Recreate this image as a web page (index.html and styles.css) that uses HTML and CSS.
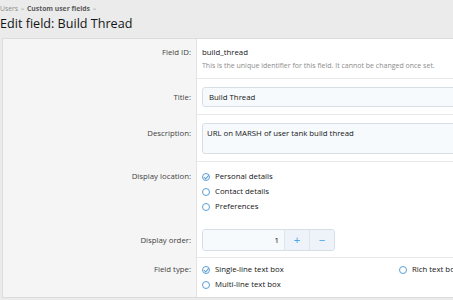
FILE: index.html
```html
<!DOCTYPE html>
<html lang="en">

<head>
    <meta charset="UTF-8">
    <meta name="viewport" content="width=device-width, initial-scale=1.0">
    <title>Edit field: Build Thread</title>
    <link rel="stylesheet" href="styles.css">
</head>

<body>
    <div class="page">
        <div class="breadcrumb">
            <a href="#">Users</a> <span class="sep">&gt;</span>
            <a href="#" class="strong">Custom user fields</a> <span class="sep">&gt;</span>
        </div>
        <h1 class="page-title">Edit field: Build Thread</h1>

        <form class="panel" action="#" method="post">
            <div class="row row-id">
                <div class="label">Field ID:</div>
                <div class="cell">
                    <div class="value">build_thread</div>
                    <div class="hint">This is the unique identifier for this field. It cannot be changed once set.</div>
                </div>
            </div>

            <div class="row row-input">
                <div class="label">Title:</div>
                <div class="cell">
                    <input type="text" class="text-input" value="Build Thread">
                </div>
            </div>

            <div class="row row-input">
                <div class="label">Description:</div>
                <div class="cell">
                    <textarea class="text-input textarea">URL on MARSH of user tank build thread</textarea>
                </div>
            </div>

            <div class="row row-choices no-line">
                <div class="label">Display location:</div>
                <div class="cell">
                    <ul class="choices">
                        <li class="choice checked"><span class="radio"></span>Personal details</li>
                        <li class="choice"><span class="radio"></span>Contact details</li>
                        <li class="choice"><span class="radio"></span>Preferences</li>
                    </ul>
                </div>
            </div>

            <div class="row row-spin">
                <div class="label">Display order:</div>
                <div class="cell">
                    <div class="spin">
                        <input type="text" class="spin-input" value="1">
                        <button type="button" class="spin-btn">+</button>
                        <button type="button" class="spin-btn">&minus;</button>
                    </div>
                </div>
            </div>

            <div class="row row-type last">
                <div class="label">Field type:</div>
                <div class="cell">
                    <ul class="choices two-col">
                        <li class="choice checked"><span class="radio"></span>Single-line text box</li>
                        <li class="choice"><span class="radio"></span>Rich text box</li>
                        <li class="choice"><span class="radio"></span>Multi-line text box</li>
                    </ul>
                </div>
            </div>
        </form>
    </div>
</body>

</html>
```

FILE: styles.css
```css
body {
    margin: 0;
    background-color: #ebebeb;
    font-family: "Open Sans", "Noto Sans", Arial, sans-serif;
    color: #141414;
    overflow: hidden;
}

.page {
    width: 700px;
}

.breadcrumb {
    font-size: 6.8px;
    color: #8c8c8c;
    padding-top: 3px;
    height: 11px;
    line-height: 11px;
}

.breadcrumb a {
    color: #8c8c8c;
    text-decoration: none;
}

.breadcrumb a.strong {
    color: #5c5c5c;
    font-weight: bold;
}

.breadcrumb .sep {
    font-size: 6px;
    padding: 0 1px;
}

.page-title {
    font-size: 12.6px;
    font-weight: normal;
    margin: 0;
    height: 24px;
    line-height: 20px;
}

.panel {
    display: block;
    margin-left: 2px;
    border: 1px solid #dcdcdc;
    background-color: #fff;
}

.row {
    display: grid;
    grid-template-columns: 194px 1fr;
}

.label {
    background-color: #f5f5f5;
    border-right: 1px solid #e3e3e3;
    text-align: right;
    font-size: 7.8px;
    color: #3f3f3f;
    padding-right: 5px;
}

.cell {
    padding-left: 5px;
    border-bottom: 1px solid #e8e8e8;
}

/* each row lines the label up with the first line of its cell */
.row-id .label,
.row-id .cell {
    padding-top: 6px;
    line-height: 14px;
}

.row-id .cell {
    padding-bottom: 5px;
}

.row-input .label,
.row-input .cell {
    padding-top: 8px;
    line-height: 20px;
}

.row-input .cell {
    padding-bottom: 7px;
}

.row-choices .label,
.row-choices .cell {
    padding-top: 7px;
    line-height: 15px;
}

.row-choices .cell {
    padding-bottom: 7px;
}

.row-spin .label,
.row-spin .cell {
    padding-top: 8px;
    line-height: 22px;
}

.row-spin .cell {
    padding-bottom: 6px;
}

.row-type .label,
.row-type .cell {
    padding-top: 4px;
    line-height: 15px;
}

.row-type .cell {
    padding-bottom: 5px;
}

.no-line .cell,
.last .cell {
    border-bottom: none;
}

.value {
    font-size: 7.8px;
}

.hint {
    font-size: 7px;
    color: #8c8c8c;
}

.text-input {
    display: block;
    box-sizing: border-box;
    width: 420px;
    height: 20px;
    margin: 0;
    padding: 0 6px;
    border: 1px solid #d8dee5;
    border-radius: 3px;
    background-color: #f7fafd;
    font-family: inherit;
    font-size: 7.8px;
    color: #141414;
}

.textarea {
    height: 31px;
    padding: 3px 4px;
    resize: none;
    line-height: 12px;
}

.choices {
    list-style: none;
    margin: 0;
    padding: 0;
}

.two-col {
    display: grid;
    grid-template-columns: 197px 1fr;
}

.choice {
    display: flex;
    align-items: center;
    font-size: 7.8px;
    color: #141414;
    height: 15px;
}

.radio {
    box-sizing: border-box;
    width: 8px;
    height: 8px;
    border: 1px solid #5a9fd6;
    border-radius: 50%;
    margin-right: 5px;
    position: relative;
}

.checked .radio::after {
    content: "";
    position: absolute;
    left: 2px;
    top: 0.5px;
    width: 1.5px;
    height: 3.5px;
    border-right: 1px solid #5a9fd6;
    border-bottom: 1px solid #5a9fd6;
    transform: rotate(40deg);
}

.spin {
    display: flex;
    width: 133px;
    height: 22px;
    border: 1px solid #d8dee5;
    border-radius: 3px;
    overflow: hidden;
    box-sizing: border-box;
}

.spin-input {
    flex: 1;
    min-width: 0;
    border: none;
    background-color: #f7fafd;
    text-align: right;
    font-family: inherit;
    font-size: 7.8px;
    padding: 0 5px;
}

.spin-btn {
    width: 25px;
    border: none;
    border-left: 1px solid #dde6ef;
    background-color: #edf3f9;
    color: #47a7eb;
    font-size: 11px;
    padding: 0;
    cursor: pointer;
}
```
